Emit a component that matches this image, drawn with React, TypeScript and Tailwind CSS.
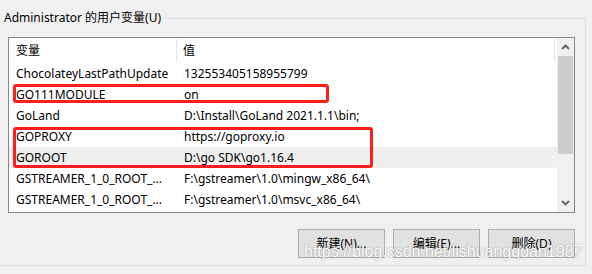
const rows: { name: string; value: string; selected?: boolean }[] = [
  { name: 'ChocolateyLastPathUpdate', value: '132553405158955799' },
  { name: 'GO111MODULE', value: 'on' },
  { name: 'GoLand', value: 'D:\\Install\\GoLand 2021.1.1\\bin;' },
  { name: 'GOPROXY', value: 'https://goproxy.io' },
  { name: 'GOROOT', value: 'D:\\go SDK\\go1.16.4', selected: true },
  { name: 'GSTREAMER_1_0_ROOT_...', value: 'F:\\gstreamer\\1.0\\mingw_x86_64\\' },
  { name: 'GSTREAMER_1_0_ROOT_...', value: 'F:\\gstreamer\\1.0\\msvc_x86_64\\' },
];

function Chevron({ up }: { up?: boolean }) {
  return (
    <svg width="9" height="6" viewBox="0 0 9 6" className="block">
      <polyline
        points={up ? '1,5 4.5,1.5 8,5' : '1,1 4.5,4.5 8,1'}
        fill="none"
        stroke="#606060"
        strokeWidth="1.8"
      />
    </svg>
  );
}

function Button({ label }: { label: string }) {
  return (
    <button className="w-[87px] h-[29px] bg-[#e1e1e1] border border-[#adadad] text-[12px] text-black flex items-center justify-center">
      {label}
    </button>
  );
}

export default function App() {
  return (
    <div
      className="w-[592px] h-[274px] bg-[#f0f0f0] overflow-hidden relative text-black"
      style={{ fontFamily: '"Noto Sans", "Noto Sans CJK SC", sans-serif' }}
    >
      <fieldset className="w-[586px] mt-[10px] m-0 p-0 pb-[7px] border-t border-r border-b border-l-0 border-[#dcdcdc]">
        <legend className="px-[4px] text-[12px] leading-[16px]">Administrator 的用户变量(U)</legend>

        {/* list view */}
        <div className="relative ml-[8px] mt-[11px] w-[567px] h-[176px] border border-[#828790] bg-white flex">
          <div className="flex-1 flex flex-col text-[12px]">
            <div className="h-[25px] flex shrink-0">
              <div className="w-[168px] pl-[7px] flex items-center border-r border-[#e5e5e5] my-[1px]">变量</div>
              <div className="w-[378px] pl-[6px] flex items-center border-r border-[#e5e5e5] my-[1px]">值</div>
            </div>
            {rows.map((r, i) => (
              <div key={i} className={`h-[21px] flex items-center ${r.selected ? 'bg-[#efefef]' : ''}`}>
                <div className="w-[169px] pl-[7px] whitespace-nowrap">{r.name}</div>
                <div className="pl-[6px] whitespace-nowrap">{r.value}</div>
              </div>
            ))}
          </div>

          {/* scrollbar */}
          <div className="w-[17px] bg-[#f0f0f0] flex flex-col">
            <div className="h-[18px] flex items-center justify-center">
              <Chevron up />
            </div>
            <div className="h-[98px] mx-[1px] bg-[#cdcdcd]" />
            <div className="flex-1" />
            <div className="h-[18px] flex items-center justify-center">
              <Chevron />
            </div>
          </div>

          {/* red annotation boxes */}
          <div className="absolute left-[4px] top-[46px] w-[316px] h-[19px] border-[3px] border-[#ff1e1e] rounded-[3px]" />
          <div className="absolute left-[4px] top-[89px] w-[360px] h-[41px] border-[3px] border-[#ff1e1e] rounded-[3px]" />
        </div>

        <div className="mt-[16px] w-[575px] flex justify-end gap-[8px]">
          <Button label="新建(N)..." />
          <Button label="编辑(E)..." />
          <Button label="删除(D)" />
        </div>
      </fieldset>

      {/* watermark */}
      <div
        className="absolute left-[304px] top-[243px] text-[16px] leading-[18px] text-white whitespace-nowrap [text-shadow:0_0_1.5px_#7a7a7a]"
        style={{ fontFamily: '"Liberation Sans", Arial, sans-serif' }}
      >
        https://blog.csdn.net/lishuangquan1987
      </div>
    </div>
  );
}
